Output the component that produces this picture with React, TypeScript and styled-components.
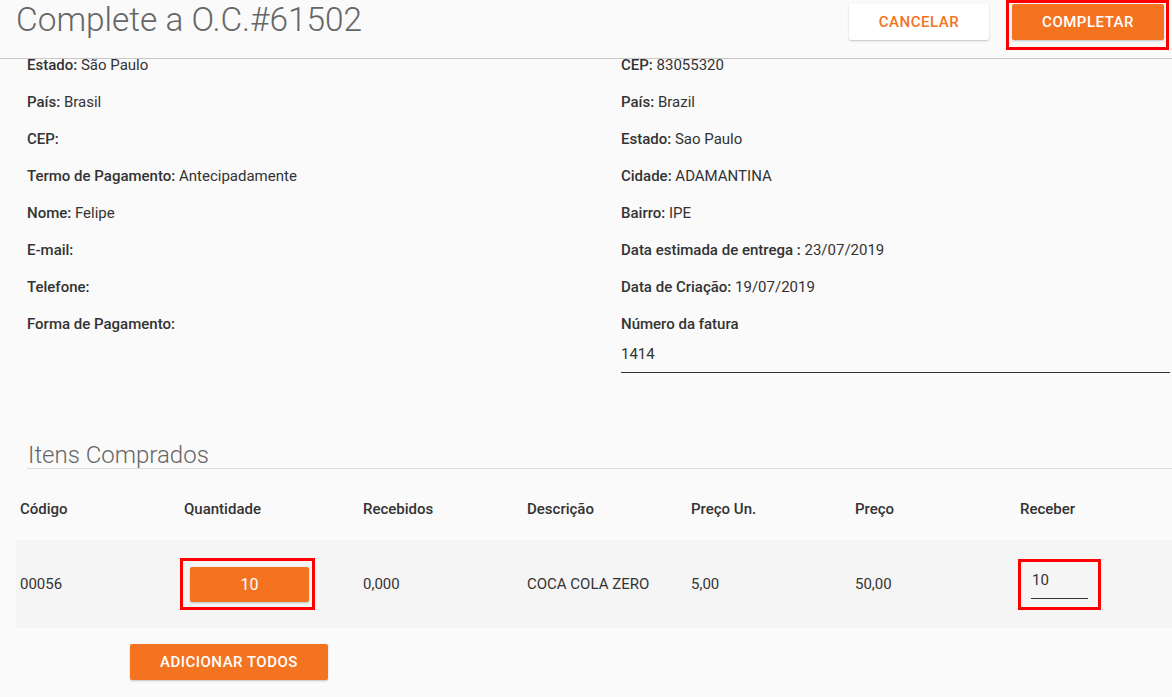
import React from 'react';
import styled, { createGlobalStyle } from 'styled-components';

const GlobalStyle = createGlobalStyle`
	html, body {
		margin: 0;
		padding: 0;
		background: #fafafa;
		font-family: Roboto, "Liberation Sans", sans-serif;
		color: #333;
	}
`

const Page = styled.div`
	width: 1172px;
	height: 697px;
	overflow: hidden;
	background: #fafafa;
`

const Header = styled.header`
	position: sticky;
	top: 0;
	z-index: 2;
	height: 58px;
	display: flex;
	align-items: flex-start;
	justify-content: space-between;
	background: #fafafa;
	border-bottom: 1px solid #c8c8c8;
`

const Title = styled.h1`
	margin: 0;
	padding: 0 0 0 16px;
	font-weight: 300;
	font-size: 33.4px;
	line-height: 40px;
	color: #666;
`

const Actions = styled.div`
	display: flex;
	align-items: flex-start;
	gap: 17px;
	padding-right: 3px;
`

const Button = styled.button<{ $outline?: boolean }>`
	border: none;
	border-radius: 2px;
	height: 36px;
	padding: 0 30px;
	font-family: Roboto, "Liberation Sans", sans-serif;
	font-size: 15px;
	font-weight: 500;
	letter-spacing: 0.5px;
	text-transform: uppercase;
	cursor: pointer;
	background: ${p => (p.$outline ? '#fff' : '#f47321')};
	color: ${p => (p.$outline ? '#f47321' : '#fff')};
	box-shadow: 0 1px 2px rgba(0, 0, 0, 0.22);
`

const Highlight = styled.div<{ $pad: string; $shift?: number }>`
	border: 3px solid #ff0000;
	padding: ${p => p.$pad};
	margin-left: ${p => p.$shift ?? 0}px;
	display: inline-flex;
	flex-direction: column;
`

const Info = styled.section`
	display: grid;
	grid-template-columns: 594px 1fr;
	padding-left: 27px;
	margin-top: -2px;
`

const Column = styled.div`
	display: flex;
	flex-direction: column;
`

const Field = styled.div`
	font-size: 15px;
	line-height: 16px;
	height: 16px;
	margin-bottom: 21px;
	white-space: nowrap;

	b {
		font-weight: 500;
	}
`

const InvoiceLabel = styled.div`
	font-size: 15px;
	line-height: 16px;
	font-weight: 500;
`

const InvoiceInput = styled.div`
	margin-top: 14px;
	font-size: 15px;
	line-height: 16px;
	padding-bottom: 10px;
	border-bottom: 1px solid #333;
	margin-right: 2px;
`

const Section = styled.section`
	margin-top: 69px;
`

const SectionTitle = styled.h2`
	margin: 0 0 0 27px;
	padding: 0 0 0 1px;
	font-size: 24px;
	font-weight: 300;
	line-height: 26px;
	color: #666;
	border-bottom: 1px solid #dadada;
`

const Table = styled.div`
	margin-top: 24px;
	padding-left: 16px;
`

const Row = styled.div<{ $body?: boolean }>`
	display: grid;
	grid-template-columns: 164px 179px 164px 164px 164px 165px 1fr;
	align-items: center;
	padding-left: 4px;
	height: ${p => (p.$body ? '88px' : '32px')};
	margin-top: ${p => (p.$body ? '15px' : '0')};
	background: ${p => (p.$body ? '#f5f5f5' : 'transparent')};
	font-size: 15px;
	font-weight: ${p => (p.$body ? 400 : 500)};
`

const QtyButton = styled(Button)`
	width: 119px;
	height: 35px;
	padding: 0;
	font-size: 16px;
	font-weight: 400;
	letter-spacing: 0;
`

const ReceiveInput = styled.div`
	width: 56px;
	font-size: 15px;
	line-height: 16px;
	padding: 7px 0 10px 1px;
	border-bottom: 1px solid #333;
`

const Footer = styled.div`
	padding: 16px 0 0 130px;
`

const left: [string, string][] = [
	['Estado:', 'São Paulo'],
	['País:', 'Brasil'],
	['CEP:', ''],
	['Termo de Pagamento:', 'Antecipadamente'],
	['Nome:', 'Felipe'],
	['E-mail:', ''],
	['Telefone:', ''],
	['Forma de Pagamento:', ''],
];

const right: [string, string][] = [
	['CEP:', '83055320'],
	['País:', 'Brazil'],
	['Estado:', 'Sao Paulo'],
	['Cidade:', 'ADAMANTINA'],
	['Bairro:', 'IPE'],
	['Data estimada de entrega :', '23/07/2019'],
	['Data de Criação:', '19/07/2019'],
];

const columns = ['Código', 'Quantidade', 'Recebidos', 'Descrição', 'Preço Un.', 'Preço', 'Receber'];

const App: React.FC = () => {
	return (
		<Page>
			<GlobalStyle />
			<Header>
				<Title>Complete a O.C.#61502</Title>
				<Actions>
					<Button $outline style={{ marginTop: 4 }}>Cancelar</Button>
					<Highlight $pad="1px 2px 7px 3px">
						<Button>Completar</Button>
					</Highlight>
				</Actions>
			</Header>
			<Info>
				<Column>
					{left.map(([k, v]) => (
						<Field key={k}><b>{k}</b> {v}</Field>
					))}
				</Column>
				<Column>
					{right.map(([k, v]) => (
						<Field key={k}><b>{k}</b> {v}</Field>
					))}
					<InvoiceLabel>Número da fatura</InvoiceLabel>
					<InvoiceInput>1414</InvoiceInput>
				</Column>
			</Info>
			<Section>
				<SectionTitle>Itens Comprados</SectionTitle>
				<Table>
					<Row>
						{columns.map(c => <div key={c}>{c}</div>)}
					</Row>
					<Row $body>
						<div>00056</div>
						<div>
							<Highlight $pad="6px 3px 5px 7px" $shift={-4}>
								<QtyButton>10</QtyButton>
							</Highlight>
						</div>
						<div>0,000</div>
						<div>COCA COLA ZERO</div>
						<div>5,00</div>
						<div>50,00</div>
						<div>
							<Highlight $pad="3px 10px 8px 10px" $shift={-2}>
								<ReceiveInput>10</ReceiveInput>
							</Highlight>
						</div>
					</Row>
				</Table>
				<Footer>
					<Button>Adicionar todos</Button>
				</Footer>
			</Section>
		</Page>
	)
}

export default App;
